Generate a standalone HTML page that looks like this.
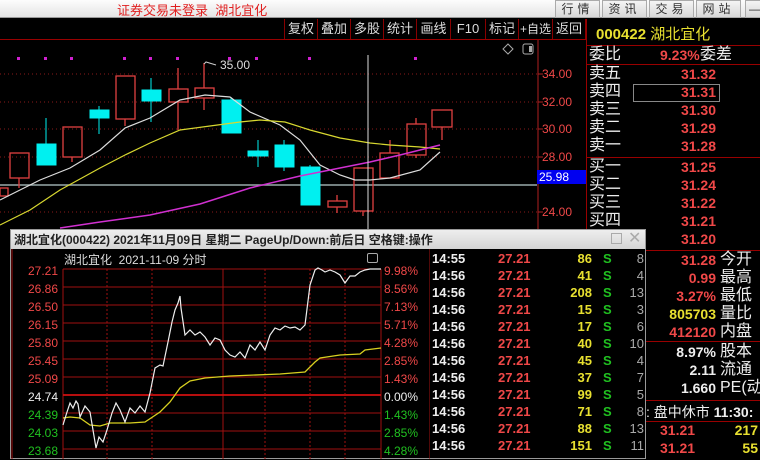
<!DOCTYPE html>
<html><head><meta charset="utf-8"><style>
*{margin:0;padding:0;box-sizing:border-box}
body{width:760px;height:459px;background:#000;overflow:hidden;position:relative;font-family:"Liberation Sans","Noto Sans CJK SC",sans-serif}
.a{position:absolute;white-space:nowrap}
.tb{position:absolute;top:0;left:0;width:760px;height:18px;background:linear-gradient(#fdfdfd,#e4e4e4);border-bottom:1px solid #999}
.tbtn{position:absolute;top:0;height:18px;width:45px;background:linear-gradient(#f4f4f4,#d8d8d8);border:1px solid #aaa;font-size:12px;color:#333;text-align:center;line-height:16px;letter-spacing:4px}
.tool{position:absolute;top:19px;height:20px;font-size:13px;color:#ddd;line-height:20px;text-align:center;border-left:1px solid #800;white-space:nowrap;overflow:hidden}
.r{color:#f04848}.y{color:#e8e030}.g{color:#20c020}.w{color:#eee}.gr{color:#aaa}
.rp{font-size:16px;line-height:18px}
.t{font-size:13px;font-weight:bold;line-height:17px}
</style></head><body>
<div class="tb"></div>
<div class="a" style="left:117px;top:0px;font-size:13px;color:#e02020">证券交易未登录 &nbsp;湖北宜化</div>
<div class="tbtn" style="left:555px">行情</div><div class="tbtn" style="left:602px">资讯</div><div class="tbtn" style="left:649px">交易</div><div class="tbtn" style="left:696px">网站</div>
<div class="tbtn" style="left:745px;width:20px;letter-spacing:0">—</div>

<div class="tool" style="left:284px;width:33px">复权</div><div class="tool" style="left:317px;width:33px">叠加</div><div class="tool" style="left:350px;width:33px">多股</div><div class="tool" style="left:383px;width:33px">统计</div><div class="tool" style="left:416px;width:34px">画线</div><div class="tool" style="left:450px;width:35px">F10</div><div class="tool" style="left:485px;width:33px">标记</div><div class="tool" style="left:518px;width:34px;font-size:12px">+自选</div><div class="tool" style="left:552px;width:34px;border-right:1px solid #800">返回</div>
<div class="a" style="left:0;top:39px;width:587px;height:1px;background:#900"></div>

<svg class="a" style="left:0;top:40px" width="587" height="190" viewBox="0 40 587 190">
<g stroke="#8a1a1a" stroke-dasharray="1,3"><line x1="0" y1="74" x2="537" y2="74"/><line x1="0" y1="102" x2="537" y2="102"/><line x1="0" y1="129" x2="537" y2="129"/><line x1="0" y1="157" x2="537" y2="157"/><line x1="0" y1="212" x2="537" y2="212"/></g>
<line x1="538" y1="40" x2="538" y2="230" stroke="#b02020"/>
<g stroke="#b02020"><line x1="538" y1="74" x2="543" y2="74"/><line x1="538" y1="102" x2="543" y2="102"/><line x1="538" y1="129" x2="543" y2="129"/><line x1="538" y1="157" x2="543" y2="157"/><line x1="538" y1="212" x2="543" y2="212"/></g>
<line x1="0" y1="185" x2="537" y2="185" stroke="#9aa" stroke-width="1.5"/>
<g fill="#d020d0"><rect x="17" y="57" width="3" height="3"/><rect x="44" y="57" width="3" height="3"/><rect x="70" y="57" width="3" height="3"/><rect x="123" y="57" width="3" height="3"/><rect x="149" y="57" width="3" height="3"/><rect x="176" y="57" width="3" height="3"/><rect x="228" y="57" width="3" height="3"/><rect x="255" y="57" width="3" height="3"/><rect x="308" y="57" width="3" height="3"/><rect x="414" y="57" width="3" height="3"/></g>
<g stroke="#e04040" fill="none" stroke-width="1.3">
<rect x="0" y="188" width="8" height="8"/>
<line x1="19" y1="178" x2="19" y2="188"/><rect x="10" y="153" width="19" height="25"/>
<line x1="72" y1="157" x2="72" y2="162"/><rect x="63" y="127" width="19" height="30"/>
<line x1="125" y1="119" x2="125" y2="126"/><rect x="116" y="76" width="19" height="43"/>
<line x1="178" y1="68" x2="178" y2="89"/><line x1="178" y1="102" x2="178" y2="130"/><rect x="169" y="89" width="19" height="13"/>
<line x1="204" y1="63" x2="204" y2="88"/><line x1="204" y1="98" x2="204" y2="110"/><rect x="195" y="88" width="19" height="10"/>
<line x1="337" y1="195" x2="337" y2="213"/><rect x="328" y="201" width="19" height="6" fill="#000"/>
<line x1="363" y1="211" x2="363" y2="216"/><rect x="354" y="168" width="19" height="43"/>
<line x1="390" y1="140" x2="390" y2="153"/><rect x="380" y="153" width="19" height="25"/>
<line x1="416" y1="118" x2="416" y2="124"/><line x1="416" y1="155" x2="416" y2="158"/><rect x="407" y="124" width="19" height="31"/>
<line x1="442" y1="127" x2="442" y2="140"/><rect x="432" y="110" width="20" height="17"/>
</g>
<g fill="#00f0f0" stroke="#00f0f0">
<line x1="46" y1="118" x2="46" y2="165"/><rect x="37" y="144" width="19" height="21"/>
<line x1="99" y1="106" x2="99" y2="134"/><rect x="90" y="110" width="19" height="8"/>
<line x1="151" y1="78" x2="151" y2="122"/><rect x="142" y="90" width="19" height="11"/>
<line x1="231" y1="97" x2="231" y2="133"/><rect x="222" y="100" width="19" height="33"/>
<line x1="258" y1="140" x2="258" y2="167"/><rect x="248" y="151" width="20" height="5"/>
<line x1="284" y1="140" x2="284" y2="171"/><rect x="275" y="145" width="19" height="22"/>
<line x1="310" y1="165" x2="310" y2="205"/><rect x="301" y="167" width="19" height="38"/>
</g>
<polyline fill="none" stroke="#ddd" stroke-width="1.2" points="0,200 20,190 40,180 70,168 100,150 125,128 150,118 180,100 205,95 230,97 250,112 280,125 300,140 320,165 340,175 355,180 370,180 390,178 420,170 440,152"/>
<polyline fill="none" stroke="#d8d830" stroke-width="1.2" points="0,225 30,210 60,190 100,168 125,155 150,143 180,130 210,126 240,122 260,120 285,122 310,130 340,138 370,143 390,145 420,147 440,149"/>
<polyline fill="none" stroke="#d030d0" stroke-width="1.5" points="60,228 100,222 150,215 200,204 250,188 300,176 340,168 370,162 400,155 440,145"/>
<line x1="368" y1="55" x2="368" y2="230" stroke="#ddd"/>
<polyline fill="none" stroke="#ccc" points="216,65 206,62 204,64"/>
<text x="220" y="69" fill="#ddd" font-size="12" font-family="Liberation Sans">35.00</text>
<path d="M508 44 l5 5 -5 5 -5 -5z" fill="none" stroke="#aaa"/>
<rect x="523" y="44" width="10" height="10" rx="2" fill="none" stroke="#aaa"/><rect x="529" y="46" width="3" height="6" fill="#aaa"/>
</svg>
<div class="a r" style="left:542px;top:67px;font-size:12px">34.00</div>
<div class="a r" style="left:542px;top:95px;font-size:12px">32.00</div>
<div class="a r" style="left:542px;top:122px;font-size:12px">30.00</div>
<div class="a r" style="left:542px;top:150px;font-size:12px">28.00</div>
<div class="a r" style="left:542px;top:205px;font-size:12px">24.00</div>
<div class="a" style="left:537px;top:170px;width:50px;height:14px;background:#0000f0;color:#fff;font-size:12px;line-height:14px;padding-left:2px">25.98</div>

<!-- right panel -->
<div class="a" style="left:586px;top:19px;width:1px;height:440px;background:#900"></div>
<div class="a y" style="left:596px;top:23px;font-size:15px;font-weight:bold">000422 <span style="font-weight:normal">湖北宜化</span></div>
<div class="a" style="left:587px;top:45px;width:173px;height:1px;background:#900"></div>
<div class="a rp w" style="left:589px;top:46px">委比</div><div class="a rp r" style="left:660px;top:46px;font-weight:bold;font-size:14px">9.23%</div><div class="a rp w" style="left:700px;top:46px">委差</div>
<div class="a" style="left:587px;top:64px;width:173px;height:1px;background:#900"></div>
<div class="a rp w" style="left:589px;top:65px;line-height:18px">卖五<br>卖四<br>卖三<br>卖二<br>卖一</div>
<div class="a rp r" style="left:660px;top:65px;font-weight:bold;font-size:14px;line-height:18px;text-align:right;width:56px">31.32<br>31.31<br>31.30<br>31.29<br>31.28</div>
<div class="a" style="left:633px;top:84px;width:87px;height:18px;border:1px solid #888"></div>
<div class="a" style="left:587px;top:157px;width:173px;height:1px;background:#900"></div>
<div class="a rp w" style="left:589px;top:158px;line-height:18px">买一<br>买二<br>买三<br>买四<br>买五</div>
<div class="a rp r" style="left:660px;top:158px;font-weight:bold;font-size:14px;line-height:18px;text-align:right;width:56px">31.25<br>31.24<br>31.22<br>31.21<br>31.20</div>
<div class="a" style="left:587px;top:250px;width:173px;height:1px;background:#900"></div>
<div class="a rp" style="left:600px;top:251px;font-weight:bold;font-size:14px;text-align:right;width:116px;line-height:18px"><span class="r">31.28</span><br><span class="r">0.99</span><br><span class="r">3.27%</span><br><span class="y">805703</span><br><span class="r">412120</span></div>
<div class="a rp w" style="left:720px;top:251px;line-height:18px">今开<br>最高<br>最低<br>量比<br>内盘</div>
<div class="a" style="left:587px;top:341px;width:173px;height:1px;background:#900"></div>
<div class="a rp w" style="left:600px;top:343px;font-weight:bold;font-size:14px;text-align:right;width:116px;line-height:18px">8.97%<br>2.11<br>1.660</div>
<div class="a rp w" style="left:720px;top:343px;line-height:18px">股本<br>流通<br>PE(动)</div>
<div class="a" style="left:587px;top:400px;width:173px;height:1px;background:#900"></div>
<div class="a w" style="left:646px;top:402px;font-size:14px">: 盘中休市 <b>11:30:</b></div>
<div class="a" style="left:587px;top:421px;width:173px;height:1px;background:#900"></div>
<div class="a r" style="left:660px;top:421px;font-size:14px;font-weight:bold;line-height:18px">31.21<br>31.21</div>
<div class="a y" style="left:700px;top:421px;font-size:14px;font-weight:bold;line-height:18px;text-align:right;width:58px">217<br>55</div>

<!-- popup -->
<div class="a" style="left:10px;top:229px;width:636px;height:230px;background:#000;border:1px solid #999"></div>
<div class="a" style="left:11px;top:230px;width:634px;height:19px;background:linear-gradient(#eee,#d4d4d4)"></div>
<div class="a" style="left:14px;top:231px;font-size:12px;font-weight:bold;color:#222">湖北宜化(000422) 2021年11月09日 星期二 PageUp/Down:前后日 空格键:操作</div>
<div class="a" style="left:611px;top:233px;width:11px;height:11px;border:1px solid #aaa"></div>
<div class="a" style="left:628px;top:228px;font-size:16px;color:#aaa">✕</div>
<div class="a" style="left:64px;top:251px;font-size:12px;color:#ddd">湖北宜化 &nbsp;2021-11-09 分时</div>
<div class="a" style="left:367px;top:253px;width:11px;height:10px;border:1px solid #aaa;border-radius:2px"></div>
<svg class="a" style="left:10px;top:249px" width="420" height="210" viewBox="10 249 420 210">
<g stroke="#a01010"><line x1="63" y1="269" x2="381" y2="269"/><line x1="63" y1="287" x2="381" y2="287"/><line x1="63" y1="305" x2="381" y2="305"/><line x1="63" y1="323" x2="381" y2="323"/><line x1="63" y1="341" x2="381" y2="341"/><line x1="63" y1="359" x2="381" y2="359"/><line x1="63" y1="377" x2="381" y2="377"/><line x1="63" y1="413" x2="381" y2="413"/><line x1="63" y1="431" x2="381" y2="431"/><line x1="63" y1="449" x2="381" y2="449"/>
<line x1="63" y1="269" x2="63" y2="459"/><line x1="223" y1="269" x2="223" y2="459"/><line x1="381" y1="269" x2="381" y2="459"/><line x1="430" y1="249" x2="430" y2="459"/><line x1="12" y1="249" x2="12" y2="459"/></g>
<line x1="63" y1="395" x2="381" y2="395" stroke="#d01010" stroke-width="1.8"/>
<g stroke="#a01010" stroke-dasharray="2,2"><line x1="107" y1="269" x2="107" y2="459"/><line x1="152" y1="269" x2="152" y2="459"/><line x1="265" y1="269" x2="265" y2="459"/><line x1="310" y1="269" x2="310" y2="459"/><line x1="345" y1="269" x2="345" y2="459"/></g>
<polyline fill="none" stroke="#d8d020" stroke-width="1.3" points="63,418 70,417 80,418 90,425 100,426 110,423 130,423 145,422 160,412 170,402 180,388 190,381 205,378 230,376 280,374 305,372 315,362 320,358 340,355 360,354 365,350 381,348"/>
<polyline fill="none" stroke="#eee" stroke-width="1.2" points="63,425 67,412 70,403 73,408 76,401 78,404 80,417 85,406 90,412 93,430 96,448 99,437 103,442 107,430 112,413 116,403 120,410 125,422 130,408 135,413 140,406 145,412 150,393 155,368 160,365 163,366 168,342 172,322 175,310 178,303 180,296 181,308 185,335 190,330 195,335 200,332 205,337 210,345 215,338 220,340 225,350 230,355 235,357 240,352 245,358 250,345 255,350 260,342 265,350 270,335 275,328 280,330 285,326 290,328 295,327 300,330 305,325 310,285 315,270 318,268 322,270 325,272 330,270 335,272 340,275 345,283 350,276 355,276 360,272 365,270 370,269 381,269"/>
</svg>
<div class="a" style="left:14px;top:262px;font-size:12px;line-height:18px;text-align:right;width:44px"><span class="r">27.21<br>26.86<br>26.50<br>26.15<br>25.80<br>25.45<br>25.09</span><br><span class="w">24.74</span><br><span class="g">24.39<br>24.03<br>23.68</span></div>
<div class="a" style="left:384px;top:262px;font-size:12px;line-height:18px"><span class="r">9.98%<br>8.56%<br>7.13%<br>5.71%<br>4.28%<br>2.85%<br>1.43%</span><br><span class="w">0.00%</span><br><span class="g">1.43%<br>2.85%<br>4.28%</span></div>
<div class="a t w" style="left:432px;top:250px">14:55<br>14:56<br>14:56<br>14:56<br>14:56<br>14:56<br>14:56<br>14:56<br>14:56<br>14:56<br>14:56<br>14:56</div>
<div class="a t r" style="left:498px;top:250px">27.21<br>27.21<br>27.21<br>27.21<br>27.21<br>27.21<br>27.21<br>27.21<br>27.21<br>27.21<br>27.21<br>27.21</div>
<div class="a t y" style="left:550px;top:250px;width:42px;text-align:right">86<br>41<br>208<br>15<br>17<br>40<br>45<br>37<br>99<br>71<br>88<br>151</div>
<div class="a t g" style="left:603px;top:250px">S<br>S<br>S<br>S<br>S<br>S<br>S<br>S<br>S<br>S<br>S<br>S</div>
<div class="a t gr" style="left:616px;top:250px;width:28px;text-align:right;font-weight:normal">8<br>4<br>13<br>3<br>6<br>10<br>4<br>7<br>5<br>8<br>13<br>11</div>
</body></html>
